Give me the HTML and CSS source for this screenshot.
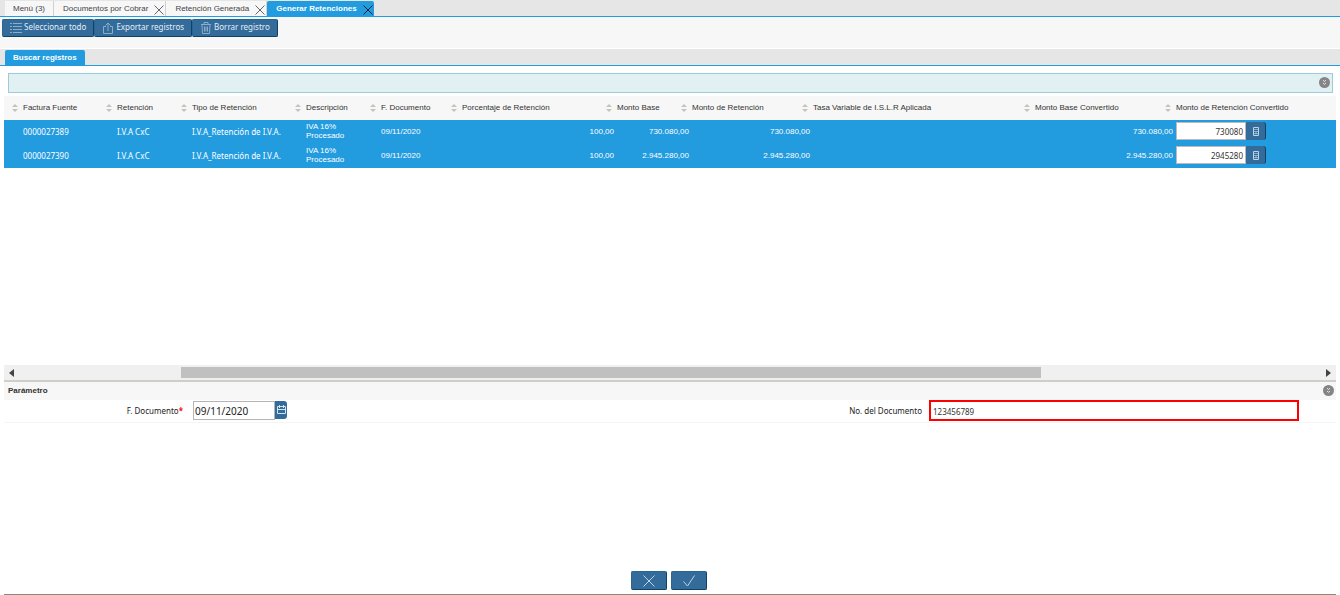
FILE: index.html
```
<!DOCTYPE html>
<html lang="es">
<head>
<meta charset="utf-8">
<title>Generar Retenciones</title>
<link rel="stylesheet" href="styles.css">
</head>
<body>
<svg class="defs" aria-hidden="true">
  <symbol id="close" viewBox="0 0 10 10"><path d="M.5.5l9 9M9.500.5l-9 9"/></symbol>
  <symbol id="calc" viewBox="0 0 8 9"><path d="M1.500.5h5v8h-5z"/><path d="M2 2.500h4M2 4.500h4M2 6.500h4M4 4v4" opacity=".6"/></symbol>
  <symbol id="fold" viewBox="0 0 11 11"><circle cx="5.500" cy="5.500" r="5.500" fill="#858585" stroke="none"/><path d="M4 3.200l1.500 1.300L7 3.200M4 6l1.500 1.300L7 6" opacity=".8"/></symbol>
</svg>
<nav class="tabs">
  <div class="tab"><button class="tab-name">Menú (3)</button></div>
  <div class="tab"><button class="tab-name">Documentos por Cobrar</button><button class="tab-close" aria-label="Cerrar"><svg><use href="#close"/></svg></button></div>
  <div class="tab"><button class="tab-name">Retención Generada</button><button class="tab-close" aria-label="Cerrar"><svg><use href="#close"/></svg></button></div>
  <div class="tab active"><button class="tab-name">Generar Retenciones</button><button class="tab-close" aria-label="Cerrar"><svg><use href="#close"/></svg></button></div>
</nav>
<div class="toolbar">
  <button class="btn"><svg class="icon" viewBox="0 0 12 12"><path d="M0 1.500h2M3 1.500h9M0 4.500h2M3 4.500h9M0 7.500h2M3 7.500h9M0 10.500h2M3 10.500h9"/></svg><span>Seleccionar todo</span></button>
  <button class="btn"><svg class="icon" viewBox="0 0 12 12"><path d="M4 4.500H1.500v7h9v-7H8M6 9V1M3.500 3.500L6 1l2.500 2.500"/></svg><span>Exportar registros</span></button>
  <button class="btn"><svg class="icon" viewBox="0 0 12 12"><path d="M1 2.500h10M4 2V.5h4V2M2 2.500l.5 9h7l.5-9M4.500 4.500v5M6 4.500v5M7.500 4.500v5"/></svg><span>Borrar registro</span></button>
</div>
<nav class="tabs"><div class="tab active"><button class="tab-name">Buscar registros</button></div></nav>
<main class="content">
  <div class="filter"><button class="fold" aria-label="Desplegar"><svg><use href="#fold"/></svg></button></div>
  <section class="list">
    <table class="grid">
      <colgroup><col class="c0"><col class="c1"><col class="c2"><col class="c3"><col class="c2"><col class="c5"><col class="c6"><col class="c2"><col class="c8"><col class="c9"><col class="c10"><col></colgroup>
      <thead><tr><th></th><th>Factura Fuente</th><th>Retención</th><th>Tipo de Retención</th><th>Descripción</th><th>F. Documento</th><th>Porcentaje de Retención</th><th>Monto Base</th><th>Monto de Retención</th><th>Tasa Variable de I.S.L.R Aplicada</th><th>Monto Base Convertido</th><th>Monto de Retención Convertido</th></tr></thead>
      <tbody>
        <tr><td></td><td class="ref">0000027389</td><td class="ref">I.V.A CxC</td><td class="ref">I.V.A_Retención de I.V.A.</td><td>IVA 16%<br>Procesado</td><td>09/11/2020</td><td class="num">100,00</td><td class="num">730.080,00</td><td class="num">730.080,00</td><td></td><td class="num">730.080,00</td><td><div class="amount"><input aria-label="Monto de Retención Convertido" value="730080"><button aria-label="Calculadora"><svg><use href="#calc"/></svg></button></div></td></tr>
        <tr><td></td><td class="ref">0000027390</td><td class="ref">I.V.A CxC</td><td class="ref">I.V.A_Retención de I.V.A.</td><td>IVA 16%<br>Procesado</td><td>09/11/2020</td><td class="num">100,00</td><td class="num">2.945.280,00</td><td class="num">2.945.280,00</td><td></td><td class="num">2.945.280,00</td><td><div class="amount"><input aria-label="Monto de Retención Convertido" value="2945280"><button aria-label="Calculadora"><svg><use href="#calc"/></svg></button></div></td></tr>
      </tbody>
    </table>
  </section>
  <div class="scrollbar"><svg class="arrow" viewBox="0 0 5 8"><path d="M5 0v8L0 4z"/></svg><div class="track"><div class="thumb"></div></div><svg class="arrow" viewBox="0 0 5 8"><path d="M0 0v8l5-4z"/></svg></div>
  <section class="params">
    <header class="params-head"><h2>Parámetro</h2><button class="fold" aria-label="Desplegar"><svg><use href="#fold"/></svg></button></header>
    <div class="form">
      <label for="fecha">F. Documento<span class="req">*</span></label>
      <div class="date"><input id="fecha" value="09/11/2020"><button aria-label="Calendario"><svg viewBox="0 0 9 10"><path d="M.5 1.500h8v7h-8zM.5 4.500h8M2.500 0v3M6.500 0v3"/></svg></button></div>
      <label for="numero">No. del Documento</label>
      <input id="numero" class="docno" value="123456789">
    </div>
  </section>
  <footer class="actions">
    <button class="btn" aria-label="Cancelar"><svg viewBox="0 0 12 12"><path d="M.5.5l11 11M11.500.5l-11 11"/></svg></button>
    <button class="btn" aria-label="Aceptar"><svg viewBox="0 0 12 12"><path d="M.5 6.500L4.500 11 11.500.5"/></svg></button>
  </footer>
</main>
</body>
</html>
```
FILE: styles.css
```
* { box-sizing: border-box; }
body {
  margin: 0;
  min-height: 100vh;
  display: flex;
  flex-direction: column;
  background: #fff;
  color: #333;
  font: 8px/12px "Liberation Sans", Arial, sans-serif;
}
button, input { font: inherit; color: inherit; margin: 0; padding: 0; border: 0; border-radius: 0; background: none; }
svg { display: block; fill: none; stroke: currentColor; }
.defs { position: absolute; width: 0; height: 0; }

.tabs { display: flex; height: 17px; padding: 1px 0 0 5px; background: #e6e6e6; border-bottom: 1px solid #229bdf; }
.tab { display: flex; background: #f7f7f7; border-right: 1px solid #d0d0d0; color: #444; }
.tab-name { padding: 0 8px; white-space: nowrap; }
.tab-close { width: 11px; padding-top: 2px; color: #666; }
.tab-close svg { width: 10px; height: 10px; }
.tab.active { background: #229bdf; color: #fff; font-weight: bold; border-right: 0; border-radius: 2px 2px 0 0; }
.tab.active .tab-close { color: #123; }
.tab:has(.tab-close) .tab-name { padding: 0 6px 0 9px; }

.toolbar { display: flex; height: 32px; padding: 2px; background: #f7f7f7; border-bottom: 1px solid #fff; }
.btn {
  display: flex;
  align-items: center;
  justify-content: center;
  gap: 2px;
  height: 18px;
  padding: 0 7px;
  background: #336b9b;
  border: 1px solid #2d648f;
  border-right-color: #0f4266;
  border-bottom-color: #0f4266;
  border-radius: 2px;
  color: #e4eef6;
  font-family: "Noto Sans", sans-serif;
  white-space: nowrap;
}
.btn span { padding-bottom: 2px; }
.icon { width: 12px; height: 12px; opacity: .5; }

.content { flex: 1; display: flex; flex-direction: column; margin: 0 4px; border-bottom: 1px solid #8f8a72; }
.filter { display: flex; justify-content: flex-end; align-items: center; height: 20px; margin: 7px 3px 3px 4px; padding: 0 2px 1px 0; background: #e0f0f3; border: 1px solid #9ccbd9; }
.fold { width: 11px; height: 11px; color: #fff; }
.fold svg { width: 11px; height: 11px; }

.list { flex: 269 1 0; overflow: hidden; }
.grid { width: 100%; table-layout: fixed; border-collapse: collapse; }
.c0 { width: 17px; } .c1 { width: 94px; } .c2 { width: 75px; } .c3 { width: 114px; }
.c5 { width: 81px; } .c6 { width: 155px; } .c8 { width: 121px; } .c9 { width: 222px; } .c10 { width: 141px; }
.grid th { position: relative; height: 24px; padding: 0 1px 1px 2px; background: #f7f7f7; font-weight: normal; text-align: left; white-space: nowrap; }
.grid th + th::before, .grid th + th::after { content: ""; position: absolute; left: -9px; border: 3px solid transparent; }
.grid th + th::before { top: 5px; border-bottom-color: #c4c4bc; }
.grid th + th::after { top: 13px; border-top-color: #c4c4bc; }
.grid td { height: 24px; padding: 0 1px 2px 2px; background: #229bdf; color: #fff; line-height: 9px; }
.grid .ref { font-family: "Noto Sans", sans-serif; white-space: nowrap; }
.grid .num { text-align: right; }
.amount { display: flex; font-family: "Noto Sans", sans-serif; }
.amount input { width: 70px; height: 18px; padding: 0 2px; background: #fff; border: 1px solid #bbb; color: #333; text-align: right; }
.amount button { display: grid; place-items: center; width: 20px; height: 18px; background: #336b9b; border-radius: 0 3px 3px 0; border-right: 1px solid #0f4266; color: #bcd3e5; }
.amount svg { width: 8px; height: 9px; }

.scrollbar { display: flex; align-items: center; height: 15px; padding: 0 5px; background: #f0f0f0; }
.arrow { width: 5px; height: 8px; fill: #444; stroke: none; }
.track { flex: 1; height: 11px; padding-left: 12.6%; }
.thumb { width: 75.1%; height: 11px; background: #c0c0c0; }

.params { flex: 189 1 0; border-top: 2px solid #cfcfc8; }
.params-head { display: flex; align-items: center; justify-content: space-between; height: 18px; padding: 0 2px 1px 4px; background: #f7f7f7; }
.params-head h2 { margin: 0; font: inherit; font-weight: bold; }
.form { display: grid; grid-template-columns: 179fr 646fr 100fr 370fr 37fr; height: 23px; padding-bottom: 1px; align-items: center; border-bottom: 1px solid #f5f5f5; font-family: "Noto Sans", sans-serif; }
.form label { text-align: right; color: #222; }
.form .date + label { padding-right: 7px; }
.req { color: #f00; font-weight: bold; }
.date { display: flex; margin-left: 10px; font-size: 10px; }
.date input { width: 82px; height: 19px; padding: 0 1px; background: #fff; border: 1px solid #b5b5b5; color: #222; }
.date button { display: grid; place-items: center; width: 12px; height: 18px; background: #336b9b; border-radius: 0 3px 3px 0; color: #d5e3ee; }
.date svg { width: 9px; height: 10px; }
.docno { width: 100%; height: 21px; padding: 1px 2px 0; border: 2px solid #f00; color: #333; }

.actions { display: flex; justify-content: center; gap: 4px; padding: 0 2px 4px 0; }
.actions .btn { width: 36px; height: 19px; }
.actions svg { width: 12px; height: 12px; opacity: .8; }
```
